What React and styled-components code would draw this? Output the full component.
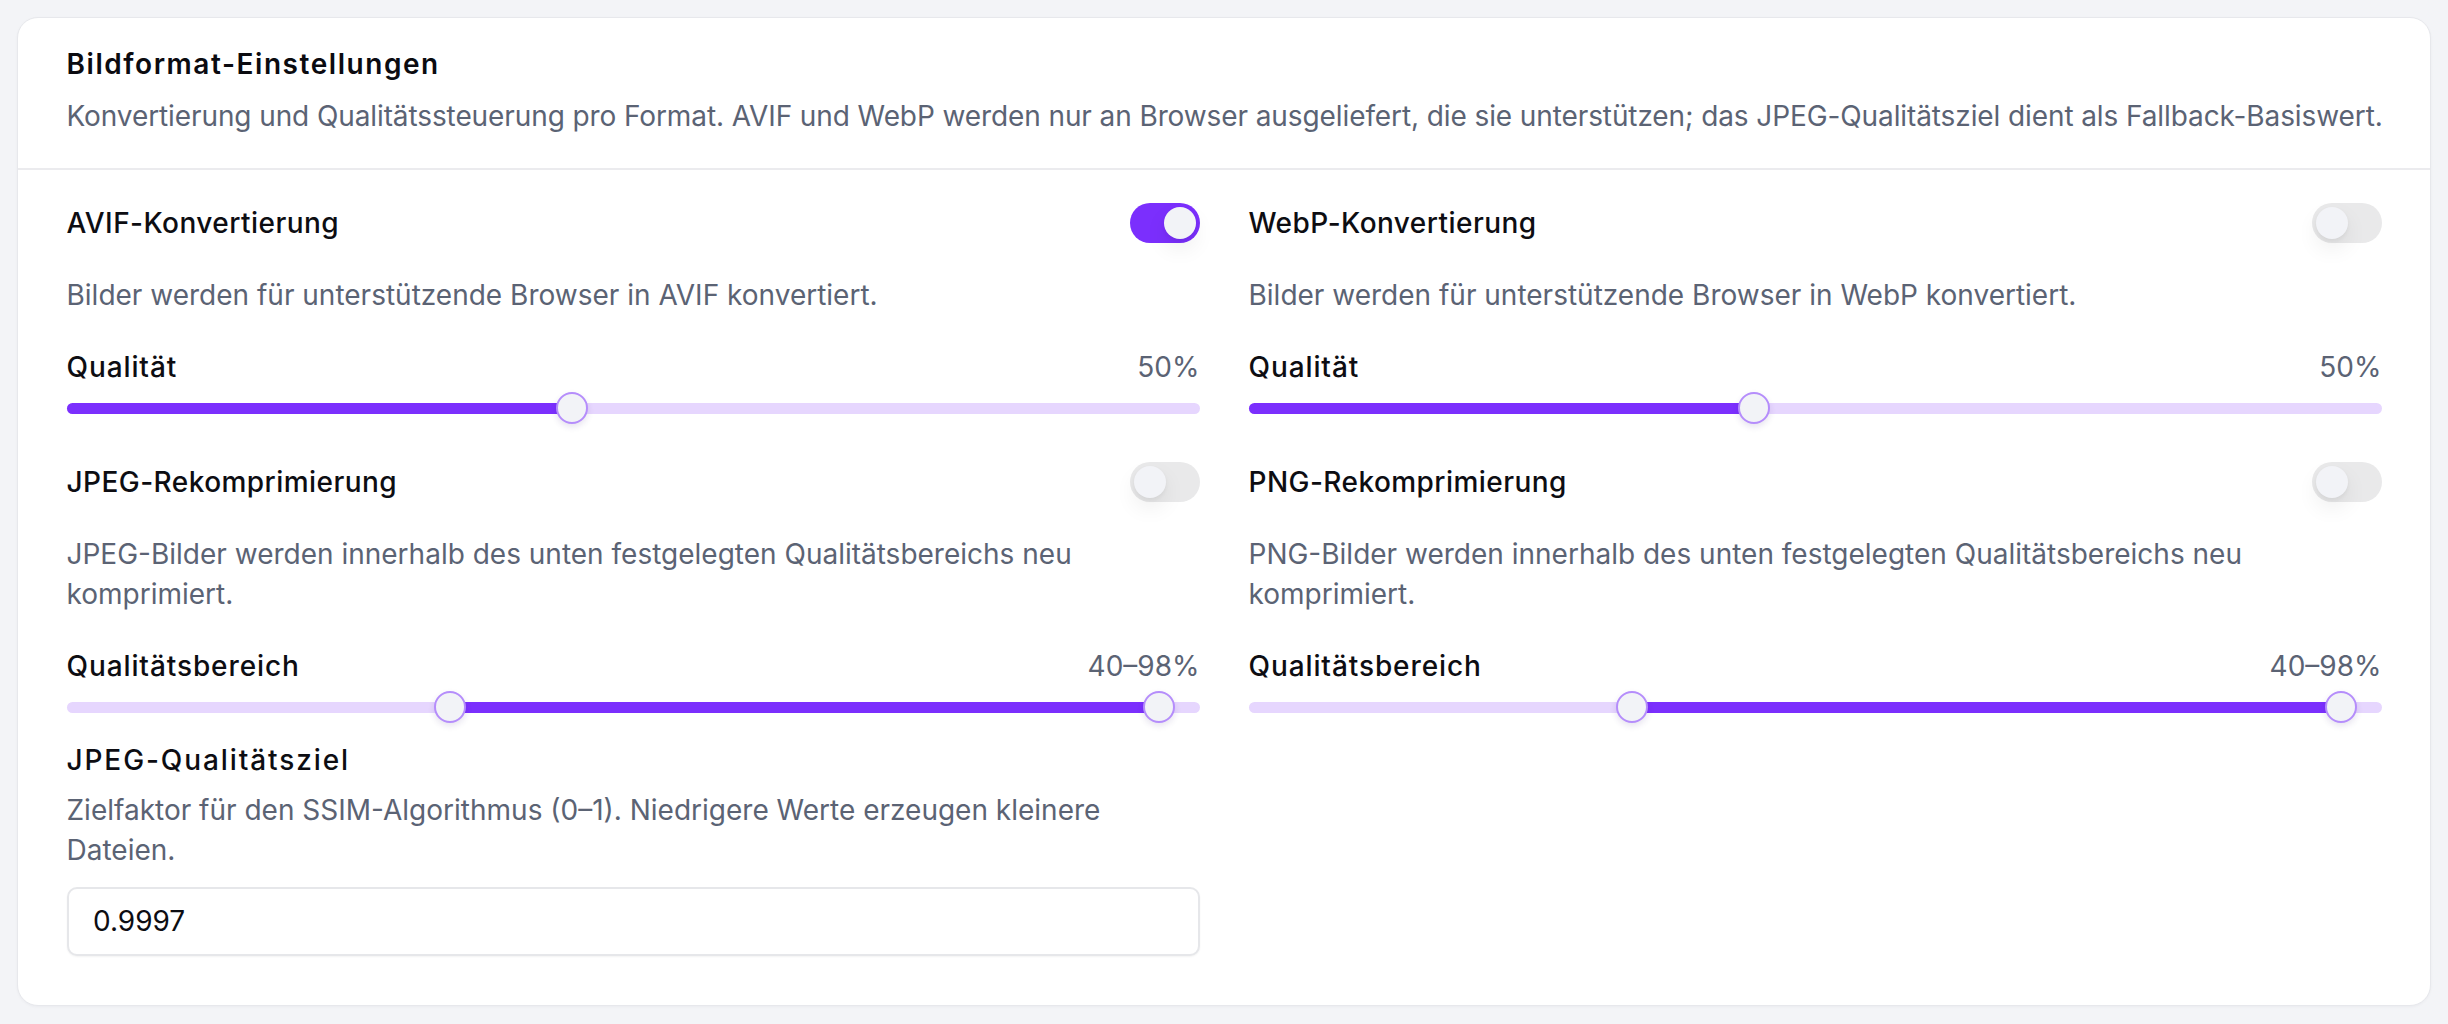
import React from "react";
import styled, { createGlobalStyle } from "styled-components";

const Global = createGlobalStyle`
  html, body { margin: 0; padding: 0; background: #f3f4f7; }
  body { font-family: Inter, "Noto Sans", "Liberation Sans", sans-serif; }
  * { box-sizing: border-box; }
`;

const PURPLE = "#7b2ffd";
const TRACK_BG = "#e6d6fe";
const GRAY_TEXT = "#5b6374";

const Page = styled.div`
  padding: 17px;
`;

const Card = styled.section`
  background: #ffffff;
  border: 1px solid #e7e8ec;
  border-radius: 21px;
  box-shadow: 0 1px 3px rgba(16, 24, 40, 0.04);
`;

const Header = styled.header`
  padding: 24.5px 48.5px 32px;
  border-bottom: 2px solid #ebebee;
`;

const Title = styled.h2`
  margin: 0;
  font-family: Inter, "Noto Sans", sans-serif;
  font-weight: 600;
  font-size: 28px;
  line-height: 42px;
  letter-spacing: 1.55px;
  color: #0b0b10;
`;

const Desc = styled.p`
  margin: ${(p) => p.$mt || 0}px 0 0;
  font-size: 28px;
  line-height: 40px;
  font-weight: 400;
  color: ${GRAY_TEXT};
  white-space: ${(p) => (p.$nowrap ? "nowrap" : "normal")};
  letter-spacing: ${(p) => (p.$nowrap ? "-0.1px" : "0")};
`;

const Body = styled.div`
  display: grid;
  grid-template-columns: 1fr 1fr;
  column-gap: 49px;
  padding: 32px 48.5px 49px;
`;

const Column = styled.div`
  display: flex;
  flex-direction: column;
  min-width: 0;
`;

const Section = styled.div`
  display: flex;
  flex-direction: column;
  margin-top: ${(p) => p.$mt || 0}px;
`;

const ToggleRow = styled.div`
  display: flex;
  align-items: center;
  justify-content: space-between;
  height: 42px;
`;

const Label = styled.span`
  font-size: 28px;
  line-height: 42px;
  font-weight: 500;
  color: #0d0d12;
  letter-spacing: ${(p) => p.$ls || 0}px;
`;

const StandaloneLabel = styled.div`
  font-size: 28px;
  line-height: 42px;
  font-weight: 500;
  letter-spacing: 1.9px;
  color: #0d0d12;
  margin-top: ${(p) => p.$mt || 0}px;
`;

const Value = styled.span`
  font-size: 28px;
  line-height: 42px;
  font-weight: 400;
  color: ${GRAY_TEXT};
`;

const SwitchTrack = styled.div`
  position: relative;
  width: 70px;
  height: 40px;
  border-radius: 999px;
  background: ${(p) => (p.$on ? PURPLE : "#e9e9ea")};
  flex-shrink: 0;
`;

const SwitchKnob = styled.div`
  position: absolute;
  top: 4px;
  left: ${(p) => (p.$on ? "34px" : "4px")};
  width: 32px;
  height: 32px;
  border-radius: 50%;
  background: #f2f3f7;
  box-shadow: 0 10px 22px rgba(0, 0, 0, 0.07), 0 2px 4px rgba(0, 0, 0, 0.05);
`;

const SliderHead = styled.div`
  display: flex;
  align-items: center;
  justify-content: space-between;
  margin-top: 31px;
`;

const SliderWrap = styled.div`
  position: relative;
  height: 32px;
  margin-top: 4.5px;
  display: flex;
  align-items: center;
`;

const Track = styled.div`
  position: relative;
  width: 100%;
  height: 11px;
  border-radius: 999px;
  background: ${TRACK_BG};
`;

const Fill = styled.div`
  position: absolute;
  top: 0;
  bottom: 0;
  background: ${PURPLE};
  border-radius: 999px;
`;

const Thumb = styled.div`
  position: absolute;
  top: 0;
  width: 32px;
  height: 32px;
  margin-left: -16px;
  border-radius: 50%;
  background: #f2f3f7;
  border: 2px solid #b58dfb;
  box-shadow: 0 3px 6px rgba(60, 30, 120, 0.12);
`;

const Input = styled.input`
  margin-top: 16.7px;
  width: 100%;
  height: 69.3px;
  padding: 0 24.5px;
  border: 2px solid #e6e7ea;
  border-radius: 10px;
  background: #fff;
  box-shadow: 0 1px 2px rgba(0, 0, 0, 0.05);
  font-family: Inter, "Noto Sans", sans-serif;
  font-size: 28px;
  color: #0d0d12;
  outline: none;
`;

const MIN = 10;
const MAX = 100;
const pos = (v) => (v - MIN) / (MAX - MIN);
const at = (f) => `calc(16px + ${f} * (100% - 32px))`;

function Switch({ on }) {
  return (
    <SwitchTrack $on={on}>
      <SwitchKnob $on={on} />
    </SwitchTrack>
  );
}

function Slider({ values }) {
  const fs = values.map(pos);
  const start = fs.length > 1 ? at(fs[0]) : "0px";
  const end = at(fs[fs.length - 1]);
  return (
    <SliderWrap>
      <Track>
        <Fill style={{ left: start, width: `calc(${end} - ${start})` }} />
      </Track>
      {fs.map((f, i) => (
        <Thumb key={i} style={{ left: at(f) }} />
      ))}
    </SliderWrap>
  );
}

function FormatBlock({ title, on, desc, sliderLabel, valueText, values, mt }) {
  return (
    <Section $mt={mt}>
      <ToggleRow>
        <Label $ls={0.45}>{title}</Label>
        <Switch on={on} />
      </ToggleRow>
      <Desc $mt={31}>{desc}</Desc>
      <SliderHead>
        <Label $ls={0.9}>{sliderLabel}</Label>
        <Value>{valueText}</Value>
      </SliderHead>
      <Slider values={values} />
    </Section>
  );
}

export default function App() {
  return (
    <>
      <Global />
      <Page>
        <Card>
          <Header>
            <Title>Bildformat-Einstellungen</Title>
            <Desc $mt={11} $nowrap>
              Konvertierung und Qualitätssteuerung pro Format. AVIF und WebP werden nur an Browser
              ausgeliefert, die sie unterstützen; das JPEG-Qualitätsziel dient als Fallback-Basiswert.
            </Desc>
          </Header>
          <Body>
            <Column>
              <FormatBlock
                title="AVIF-Konvertierung"
                on
                desc="Bilder werden für unterstützende Browser in AVIF konvertiert."
                sliderLabel="Qualität"
                valueText="50%"
                values={[50]}
              />
              <FormatBlock
                mt={36.7}
                title="JPEG-Rekomprimierung"
                on={false}
                desc="JPEG-Bilder werden innerhalb des unten festgelegten Qualitätsbereichs neu komprimiert."
                sliderLabel="Qualitätsbereich"
                valueText="40–98%"
                values={[40, 98]}
              />
              <StandaloneLabel $mt={15.8}>JPEG-Qualitätsziel</StandaloneLabel>
              <Desc $mt={9}>
                Zielfaktor für den SSIM-Algorithmus (0–1). Niedrigere Werte erzeugen kleinere Dateien.
              </Desc>
              <Input type="text" readOnly value="0.9997" />
            </Column>
            <Column>
              <FormatBlock
                title="WebP-Konvertierung"
                on={false}
                desc="Bilder werden für unterstützende Browser in WebP konvertiert."
                sliderLabel="Qualität"
                valueText="50%"
                values={[50]}
              />
              <FormatBlock
                mt={36.7}
                title="PNG-Rekomprimierung"
                on={false}
                desc="PNG-Bilder werden innerhalb des unten festgelegten Qualitätsbereichs neu komprimiert."
                sliderLabel="Qualitätsbereich"
                valueText="40–98%"
                values={[40, 98]}
              />
            </Column>
          </Body>
        </Card>
      </Page>
    </>
  );
}
